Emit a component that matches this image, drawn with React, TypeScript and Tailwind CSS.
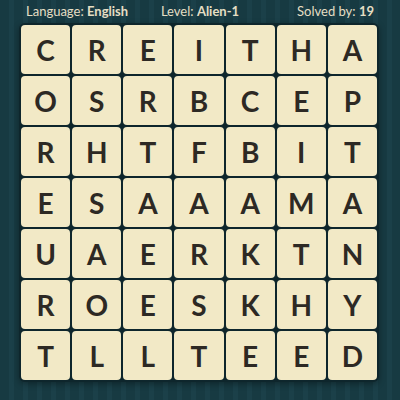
import React from 'react';

const rows = ['CREITHA', 'OSRBCEP', 'RHTFBIT', 'ESAAAMA', 'UAERKTN', 'ROESKHY', 'TLLTEED'];

const App: React.FC = () => {
    return (
        <div className="w-[400px] h-[400px] overflow-hidden bg-[#173a42] bg-[repeating-linear-gradient(90deg,#173a42_0px,#173a42_9px,#1b4049_9px,#1b4049_14px)] font-['Lato',sans-serif]">
            <div className="grid grid-cols-3 items-center h-[23px] px-[26px] text-[13px] leading-none text-[#e5dec4]">
                <div>Language: <span className="font-bold">English</span></div>
                <div className="text-center">Level: <span className="font-bold">Alien-1</span></div>
                <div className="text-right">Solved by: <span className="font-bold">19</span></div>
            </div>
            <div className="ml-[19px] w-[360px] p-[2px] rounded-[6px] bg-[#0e262c] shadow-[0_2px_6px_rgba(0,0,0,0.35)]">
                <div className="grid grid-cols-7 gap-[2px] w-[356px]">
                    {rows.join('').split('').map((ch, i) => (
                        <div
                            key={i}
                            className="h-[49px] rounded-[4px] bg-[#f2e9c6] flex items-center justify-center text-[28px] font-bold text-[#2d2924] leading-none"
                        >
                            {ch}
                        </div>
                    ))}
                </div>
            </div>
        </div>
    );
};

export default App;
